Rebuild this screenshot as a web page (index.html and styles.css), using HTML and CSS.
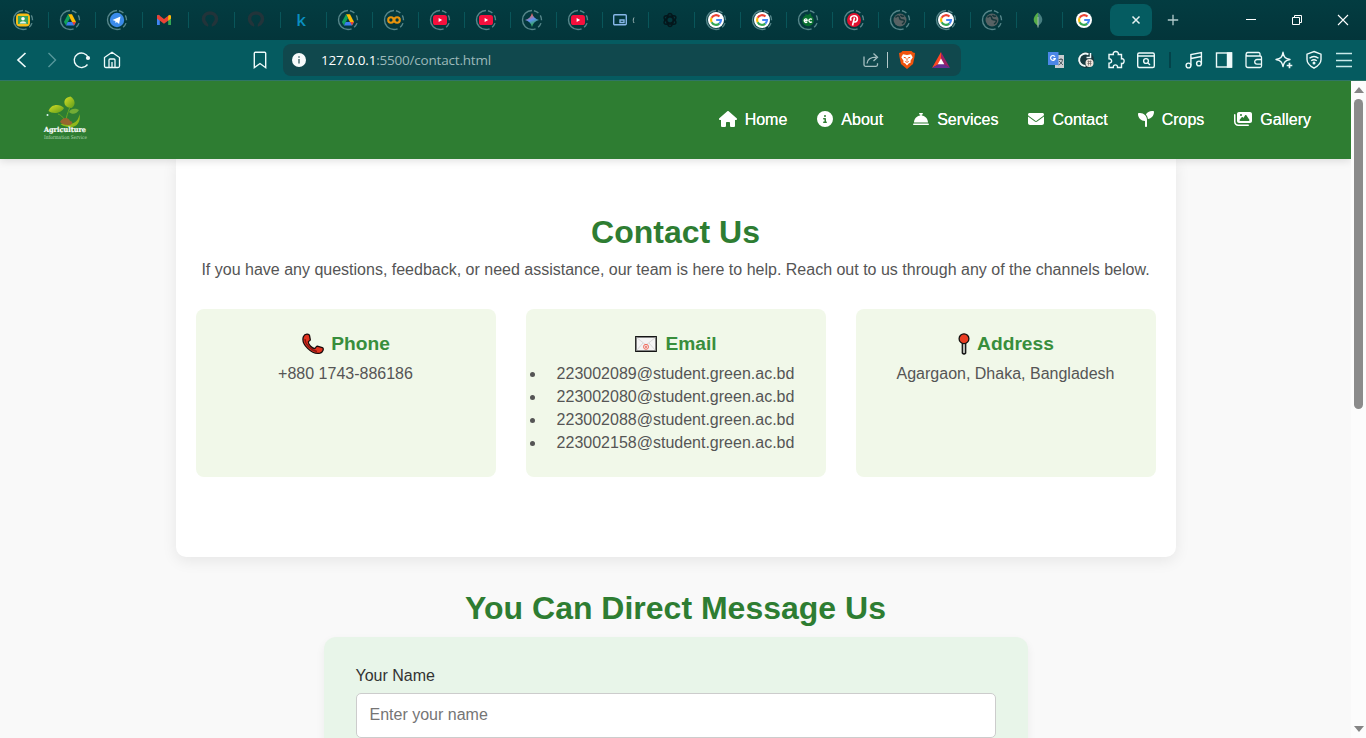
FILE: index.html
```html
<!DOCTYPE html>
<html lang="en">
<head>
<meta charset="utf-8">
<title>Contact</title>
<link rel="stylesheet" href="styles.css">
</head>
<body>
<svg class="defs" aria-hidden="true">
  <defs>
    <linearGradient id="spark" gradientUnits="userSpaceOnUse" x1="9" y1="6" x2="14" y2="19"><stop offset=".1" stop-color="#e9665c"/><stop offset=".45" stop-color="#5f8ff0"/><stop offset=".8" stop-color="#37a56a"/></linearGradient>
    <linearGradient id="leafA" x1="0" y1="0" x2="1" y2="1"><stop offset="0" stop-color="#d7df23"/><stop offset="1" stop-color="#5d9c1c"/></linearGradient>
  </defs>
  <symbol id="ring" viewBox="0 0 24 24"><g fill="none" stroke="#56868a" stroke-width="1.4"><path d="M12 2.500A9.500 9.500 0 0 0 12 21.500"/><path d="M12 2.500A9.500 9.500 0 0 1 12 21.500" stroke-dasharray="5 3" stroke-dashoffset="-2"/></g></symbol>
  <symbol id="drive" viewBox="0 0 24 24"><use href="#ring"/><path d="M10 6.300h4l4 7.600h-4z" fill="#fbbc04"/><path d="M10 6.300l2 3.800-4 7.400-2.100-3.400z" fill="#12a15a"/><path d="M9.700 14H18l-2 3.500H8z" fill="#3b7ded"/><path d="M14.200 14H18l-2 3.500z" fill="#ea4335"/></symbol>
  <symbol id="yt" viewBox="0 0 24 24"><use href="#ring"/><rect x="5" y="7" width="14" height="10" rx="2.600" fill="#f5103d"/><path d="M10.600 9.900v4.200l3.600-2.100z" fill="#fff"/></symbol>
  <symbol id="gmark" viewBox="0 0 24 24"><circle cx="12" cy="12" r="8" fill="#fff"/><g fill="none" stroke-width="2.100"><path d="M15.500 8.600A5 5 0 0 0 7.600 9.800" stroke="#ea4335"/><path d="M7.600 9.800a5 5 0 0 0 0 4.400" stroke="#fbbc05"/><path d="M7.600 14.200a5 5 0 0 0 7.700 1.400" stroke="#34a853"/><path d="M15.300 15.600A5 5 0 0 0 17 12h-4.800" stroke="#4285f4"/></g></symbol>
  <symbol id="globe" viewBox="0 0 24 24"><use href="#ring"/><circle cx="12" cy="12" r="6.500" fill="#576264"/><path d="M7.500 9.500c2-2.500 4-1.500 4 0s1.500 2.500 3.500 2.500 2 2-1 4M12.500 7c1 1.500 2.500 1.500 3.500 1" fill="none" stroke="#17373b" stroke-width="1.500"/></symbol>
  <symbol id="ghost" viewBox="0 0 24 24"><path d="M8.500 18c1-2-3-3-3-7 0-8 13-8 13 0 0 4-4 5-3 7" fill="none" stroke="#22343a" stroke-width="3.500"/></symbol>
</svg>

<div class="tabstrip">
  <div class="tab wide"><svg viewBox="0 0 24 24"><use href="#ring"/><rect x="5" y="5.500" width="14" height="13" rx="4" fill="#f5bd18"/><rect x="7" y="8" width="10" height="8" fill="#36a15c"/><circle cx="12" cy="10.700" r="1.800" fill="#fff"/><path d="M8.500 15.500c1-3 6-3 7 0z" fill="#e6f4e9"/></svg></div>
  <div class="tab wide"><svg><use href="#drive"/></svg></div>
  <div class="tab wide"><svg viewBox="0 0 24 24"><use href="#ring"/><circle cx="12" cy="12" r="7.200" fill="#3b8bea"/><path d="M7.500 12l8-3.600-1.400 7.600-2.300-1.900-1.200 1.200-.3-2.300z" fill="#fff"/></svg></div>
  <div class="tab"><svg viewBox="0 0 24 24"><path d="M5 7.500h2.800V17H5z" fill="#4285f4"/><path d="M16.200 7.500H19V17h-2.800z" fill="#34a853"/><path d="M5 7.500l1.500-.8L12 11l5.500-4.300L19 8v2.600l-7 5.200-7-5.200z" fill="#ea4335"/><path d="M16.200 8v4.700L19 10.600V8l-1.200-1z" fill="#fbbc04"/></svg></div>
  <div class="tab"><svg><use href="#ghost"/></svg></div>
  <div class="tab"><svg><use href="#ghost"/></svg></div>
  <div class="tab"><span class="k">k</span></div>
  <div class="tab"><svg><use href="#drive"/></svg></div>
  <div class="tab"><svg viewBox="0 0 24 24"><use href="#ring"/><g fill="none" stroke="#e8930c" stroke-width="2.100"><circle cx="8.900" cy="12" r="2.700"/><circle cx="15.100" cy="12" r="2.700"/></g></svg></div>
  <div class="tab"><svg><use href="#yt"/></svg></div>
  <div class="tab"><svg><use href="#yt"/></svg></div>
  <div class="tab"><svg viewBox="0 0 24 24"><use href="#ring"/><path d="M12 5c1 3.800 3 5.800 7 7-4 1-6 3.200-7 7-1-3.800-3-6-7-7 4-1.200 6-3.200 7-7z" fill="url(#spark)"/></svg></div>
  <div class="tab"><svg><use href="#yt"/></svg></div>
  <div class="tab"><svg viewBox="0 0 24 24"><g fill="none" stroke="#87b7e8" stroke-width="1.400"><rect x="1.700" y="6.700" width="12.600" height="10" rx="1"/><path d="M8 12h4v2.500H8z"/></g><path d="M22 9.500c-1 2-1 3.500 0 5.500" fill="none" stroke="#9cb4b4"/></svg></div>
  <div class="tab"><svg viewBox="0 0 24 24"><g fill="none" stroke="#04171c" stroke-width="1.500"><ellipse cx="12" cy="12" rx="3.200" ry="6.600"/><ellipse cx="12" cy="12" rx="3.200" ry="6.600" transform="rotate(60 12 12)"/><ellipse cx="12" cy="12" rx="3.200" ry="6.600" transform="rotate(120 12 12)"/></g></svg></div>
  <div class="tab"><svg viewBox="0 0 24 24"><use href="#ring"/><use href="#gmark"/></svg></div>
  <div class="tab"><svg viewBox="0 0 24 24"><use href="#ring"/><use href="#gmark"/></svg></div>
  <div class="tab"><svg viewBox="0 0 24 24"><use href="#ring"/><circle cx="12" cy="12.500" r="5.800" fill="#08702f"/><path d="M9 6l3 1 2.500-2 1 3-5 1z" fill="#08702f"/><g fill="none" stroke="#fff" stroke-width="1.300"><path d="M8.200 12.600h3c0-2.200-3-2.200-3 0s2 2.200 3 1.400M15.900 11.400c-1.200-1-3-.2-3 1.200s1.800 2.200 3 1.200"/></g></svg></div>
  <div class="tab"><svg viewBox="0 0 24 24"><use href="#ring"/><circle cx="12" cy="12" r="7" fill="#e0102f"/><path d="M10.500 17.500l2-8M9.200 12.700c-1.800-3 .3-5 2.900-5 4.500 0 4 6.300.8 6.300-1 0-1.500-.6-1.500-.6" fill="none" stroke="#fff" stroke-width="1.600"/></svg></div>
  <div class="tab"><svg><use href="#globe"/></svg></div>
  <div class="tab"><svg viewBox="0 0 24 24"><use href="#ring"/><use href="#gmark"/></svg></div>
  <div class="tab"><svg><use href="#globe"/></svg></div>
  <div class="tab"><svg viewBox="0 0 24 24"><path d="M12 4.500c-6 5-5.500 10 0 13.500z" fill="#55ad47"/><path d="M12 4.500c6 5 5.500 10 0 13.500z" fill="#477e80"/><path d="M12 9v10.500" stroke="#a7bfaf"/></svg></div>
  <div class="tab last"><svg><use href="#gmark"/></svg></div>
  <div class="tab-active"><svg viewBox="0 0 10 10"><path d="M1.500 1.500l7 7m0-7l-7 7" stroke="#e6f2f2" stroke-width="1.500"/></svg></div>
  <div class="newtab"><svg viewBox="0 0 12 12"><path d="M6 .8v10.400M.8 6h10.400" stroke="#b3cccd" stroke-width="1.300"/></svg></div>
  <div class="winctl">
    <svg viewBox="0 0 12 12"><path d="M1 5.500h10" stroke="#fff"/></svg>
    <svg viewBox="0 0 12 12"><path d="M1.500 3.500h7v7h-7zM3.500 3.500v-2h7v7h-2" fill="none" stroke="#fff"/></svg>
    <svg viewBox="0 0 12 12"><path d="M1 1l10 10M11 1L1 11" stroke="#fff" stroke-width="1.100"/></svg>
  </div>
</div>

<div class="toolbar">
  <div class="tools">
    <svg viewBox="0 0 30 30"><path d="M18.500 8l-7.500 7 7.500 7" stroke-width="1.700"/></svg>
    <svg viewBox="0 0 30 30"><path d="M11.500 8l7 7-7 7" stroke="#57979b"/></svg>
    <svg viewBox="0 0 30 30"><path d="M20.500 19.500a7.300 7.300 0 1 1 .8-7"/><circle cx="21" cy="13" r="2.100" fill="#eefafa" stroke="none"/></svg>
    <svg viewBox="0 0 30 30"><path d="M7.500 12.500l7.500-5.300 7.500 5.300v8.500q0 1.500-1.500 1.500H9q-1.500 0-1.500-1.500zM12 22.500v-7.500q0-1 1-1h4q1 0 1 1v7.500M15 17v5.500" stroke-width="1.300"/></svg>
  </div>
  <div class="tools bookmark"><svg viewBox="0 0 30 30"><path d="M9.300 8.300q0-1 1-1h9.400q1 0 1 1v14.400L15 18.500l-5.700 4.200z"/></svg></div>
  <div class="urlbar">
    <svg class="info" viewBox="0 0 14 14"><circle cx="7" cy="7" r="7" fill="#f7fbfb"/><path d="M7 6v4.500M7 3.300v1.500" stroke="#54777a" stroke-width="1.600"/></svg>
    <div class="url"><b>127.0.0.1</b>:5500/contact.html</div>
    <svg class="ico" viewBox="0 0 16 16"><path d="M1 4.500v8.300q0 1.500 1.500 1.500H13q1.500 0 1.500-1.500v-1.500M4 11.500c.4-4.500 3-6.300 9.500-6.300M10.500 1.500l4 3.700-4 3.700" fill="none" stroke="#a6bfc1" stroke-width="1.300"/></svg>
    <i class="sep"></i>
    <svg class="brave" viewBox="0 0 18 18"><path d="M4.500 0h9l1.500 1.500 2 .5-.5 4L15 13l-6 5-6-5L1.500 6 1 2l2-.5z" fill="#f0530c"/><path d="M5 3.300L9 4l4-.7 1.700 3-2.200 3.500.2 1.800-2 .9L9 14.500l-1.700-2-2-.9.200-1.800-2.200-3.500z" fill="#fff"/><path d="M5.800 6.300l2.200.7M12.200 6.300l-2.200.7M9 7.200v2.500M7.300 10.500l1.700.8 1.700-.8" stroke="#f0530c" fill="none"/></svg>
    <svg class="bat" viewBox="0 0 18 16"><path d="M9 0L0 16l9-5z" fill="#ff4724"/><path d="M9 0l9 16-9-5z" fill="#9e1f63"/><path d="M0 16h18l-9-5.500z" fill="#662d91"/><path d="M9 6.500l3.300 5.800H5.700z" fill="#fff"/></svg>
  </div>
  <div class="tools right">
    <svg viewBox="0 0 30 30"><rect x="14" y="10" width="9" height="13" fill="#c9cdd0" stroke="none"/><rect x="7" y="7" width="10.500" height="13" fill="#4b87e8" stroke="none"/><path d="M14 11.600a2.400 2.400 0 1 0 .3 2h-2" stroke="#fff" stroke-width="1.200"/><path d="M17.500 14.500H22M20 13v1.500M21.500 15c-.5 2.500-2 4-4 5M18 16l4 4" stroke="#56646b" stroke-width="1"/></svg>
    <svg viewBox="0 0 30 30"><circle cx="15" cy="15" r="8" fill="#17393e" stroke="none"/><path d="M17.500 9.500a6.200 6.200 0 1 0-3 11.500" stroke-width="2"/><path d="M15.500 12.500h4V8" stroke-width="1.500"/><circle cx="18.500" cy="18" r="4" fill="#efe4dc" stroke="none"/><path d="M16.500 16.500h4M16.500 18.500h4M17.500 15.500v5M19.500 15.500v5" stroke="#796e69" stroke-width=".8"/></svg>
    <svg viewBox="0 0 30 30"><path d="M8 9.500h4.300c-1-4 6-4 5 0h3.200v4.300c3.500-1 3.500 5.500 0 4.700v4h-4c.5-3.500-4.700-3.500-4.200 0H8v-4.300c3.500.2 3.500-4.500 0-4.400z"/></svg>
    <svg viewBox="0 0 30 30"><rect x="6.700" y="8" width="16.600" height="14.500" rx="1.500"/><path d="M7 11h16M17 18l2 2"/><circle cx="15" cy="16" r="2.400"/></svg>
    <i class="sep"></i>
    <svg viewBox="0 0 30 30"><circle cx="9.500" cy="20.500" r="2.400"/><circle cx="20" cy="18.500" r="2.400"/><path d="M11.900 20.500V9.500L22.400 7.500v11M11.900 13.500L22.400 11.500"/></svg>
    <svg viewBox="0 0 30 30"><rect x="7.500" y="8" width="15" height="14"/><path d="M18.500 8h4v14h-4z" fill="#eefafa"/></svg>
    <svg viewBox="0 0 30 30"><path d="M21 11V9q0-1.500-1.500-1.500h-11a1.800 1.800 0 0 0 0 3.500H21q1.500 0 1.500 1.500v8.500q0 1.500-1.500 1.500H9q-2 0-2-2V9.500M22.500 14.500H18a2.300 2.300 0 0 0 0 4.600h4.500" stroke-width="1.300"/></svg>
    <svg viewBox="0 0 30 30"><path d="M14 7.300c.9 5 2.200 6.200 7 7.200-4.800 1-6.100 2.700-7 7-.9-4.300-2.200-6-7-7 4.800-1 6.100-2.200 7-7.200z" stroke-linejoin="round"/><path d="M20.500 17.700v5.600M17.700 20.500h5.600" stroke-width="1.700"/></svg>
    <svg viewBox="0 0 30 30"><path d="M15 6.500l7 2.700v5.300c0 4.500-4 7-7 8.700-3-1.700-7-4.200-7-8.700V9.200z"/><path d="M10.500 13.200q4.500-3.500 9 0M12.200 15.800q2.800-2 5.600 0"/><circle cx="15" cy="18" r=".8" fill="#eefafa"/></svg>
    <svg viewBox="0 0 30 30"><path d="M7 8.500h16M7 15.500h16M7 21.500h16" stroke="#c9eaea" stroke-width="1.700"/></svg>
  </div>
</div>

<div class="viewport">
  <div class="page">
    <header class="site-header">
      <svg class="logo" viewBox="0 0 50 50">
        <path d="M26 28C35 31 39 24 39.500 19c1.500 8-3 14-10 13-4 0-8-2-9-3z" fill="#8fb71b"/>
        <path d="M25.500 30C25 23 21 20 18 19m8 8c0-6 2-9 3.500-14" stroke="#67a822" fill="none"/>
        <path d="M8.500 16c2-7 11-8 15.500-3-3 6-12 6-15.500 3z" fill="url(#leafA)"/>
        <path d="M25 10C23 5 26 2.500 30.500 1.500c5 3 5.500 9 1 11.500-3 0-5-1-6.500-3z" fill="url(#leafA)"/>
        <path d="M29 17c2-4 7-4 10-2-2 4-7 5-10 2z" fill="#72ac35"/>
        <path d="M20 27c2-4 8-6 10-1 3 0 3 3 0 4-4 0-7 0-10-3z" fill="#97652e"/>
        <circle cx="7.500" cy="20" r="1" fill="#dff5f5"/>
        <text class="logo-name" x="4" y="37" textLength="42" lengthAdjust="spacingAndGlyphs">Agriculture</text>
        <text class="logo-sub" x="4" y="43.500" textLength="43" lengthAdjust="spacingAndGlyphs">Information Service</text>
      </svg>
      <nav class="nav">
        <a><svg class="w18" viewBox="0 0 576 512"><path d="M575.800 255.500c0 18-15 32.100-32 32.100h-32l.7 160.200V472c0 22.100-17.900 40-40 40H392c-22.100 0-40-17.900-40-40v-88c0-17.700-14.300-32-32-32h-64c-17.700 0-32 14.300-32 32v88c0 22.100-17.900 40-40 40h-80c-22.100 0-40-17.900-40-40V287.600H32c-18 0-32-14-32-32.100 0-9 3-17 10-24L266.400 8c7-7 15-8 22-8s15 2 21 7l255.400 224.500c8 7 12 15 11 24z"/></svg>Home</a>
        <a><svg viewBox="0 0 512 512"><path d="M256 512A256 256 0 1 0 256 0a256 256 0 1 0 0 512zM216 336h24v-64h-24c-13.300 0-24-10.700-24-24s10.700-24 24-24h48c13.300 0 24 10.700 24 24v88h8c13.300 0 24 10.700 24 24s-10.700 24-24 24h-80c-13.300 0-24-10.700-24-24s10.700-24 24-24zm40-208a32 32 0 1 1 0 64 32 32 0 1 1 0-64z"/></svg>About</a>
        <a><svg viewBox="0 0 512 512"><path d="M216 64c-13.300 0-24 10.700-24 24s10.700 24 24 24h16v33.300C119.600 157.200 32 252.400 32 368h448c0-115.600-87.600-210.800-200-222.700V112h16c13.300 0 24-10.700 24-24s-10.700-24-24-24h-80zM24 400c-13.300 0-24 10.700-24 24s10.700 24 24 24h464c13.300 0 24-10.700 24-24s-10.700-24-24-24H24z"/></svg>Services</a>
        <a><svg viewBox="0 0 512 512"><path d="M48 64C21.500 64 0 85.500 0 112c0 15.100 7.100 29.300 19.200 38.400l217.600 163.200c11.400 8.500 27 8.500 38.400 0l217.600-163.200c12.100-9.100 19.200-23.300 19.200-38.400 0-26.500-21.500-48-48-48H48zM0 176v208c0 35.300 28.700 64 64 64h384c35.300 0 64-28.700 64-64V176L294.400 339.200c-22.800 17.100-54 17.100-76.800 0L0 176z"/></svg>Contact</a>
        <a><svg viewBox="0 0 512 512"><path d="M512 32c0 113.600-84.600 207.500-194.200 222-7.100-53.400-30.600-101.600-65.300-139.300C290.800 46.300 364 0 448 0h32c17.700 0 32 14.300 32 32zM0 96c0-17.700 14.300-32 32-32h32c123.700 0 224 100.300 224 224v192c0 17.700-14.300 32-32 32s-32-14.300-32-32V320C100.300 320 0 219.700 0 96z"/></svg>Crops</a>
        <a><svg class="w18" viewBox="0 0 576 512"><path d="M160 32c-35.300 0-64 28.700-64 64v224c0 35.300 28.700 64 64 64h352c35.300 0 64-28.700 64-64V96c0-35.300-28.700-64-64-64H160zM396 138.700l96 144c4.900 7.400 5.400 16.800 1.200 24.600S480.900 320 472 320H200c-9.200 0-17.600-5.300-21.600-13.600s-2.900-18.200 2.900-25.400l64-80c4.600-5.700 11.400-9 18.700-9s14.200 3.300 18.700 9l17.300 21.600 56-84C360.500 132 368 128 376 128s15.500 4 20 10.700zM192 128a32 32 0 1 1 64 0 32 32 0 1 1-64 0zM48 120c0-13.300-10.700-24-24-24S0 106.700 0 120v224c0 75.100 60.900 136 136 136h320c13.300 0 24-10.700 24-24s-10.700-24-24-24H136c-48.600 0-88-39.400-88-88V120z"/></svg>Gallery</a>
      </nav>
    </header>
    <section class="contact">
      <h2>Contact Us</h2>
      <p>If you have any questions, feedback, or need assistance, our team is here to help. Reach out to us through any of the channels below.</p>
      <div class="cards">
        <div class="card">
          <h3><svg class="phone" viewBox="0 0 22 22"><path d="M1.500 3.500C3 .5 7 .5 7.500 2.500l.8 4.300c0 1.200-2 1.200-2 2.200 0 2.500 4 6.500 6.500 6.500 1 0 1-2.500 2.500-2.300l5 1.300c2 1 .5 5-2.300 5.700C10 22-1.500 11 1.500 3.500z" fill="#e3331f" stroke="#1a0b0b" stroke-width="1.300"/><path d="M3 6c0 5 6 11.500 12 12.500" fill="none" stroke="#8e1412" stroke-width="1.300"/></svg>Phone</h3>
          <p>+880 1743-886186</p>
        </div>
        <div class="card">
          <h3><svg class="mail" viewBox="0 0 22 16"><path d="M.8.800h20.400v14.400H.8z" fill="#f4f4f4" stroke="#151515" stroke-width="1.400"/><path d="M1.500 1.500L11 9l9.500-7.500M1.500 14.500L8 7m12.500 7.500L14 7" fill="none" stroke="#d2d2d2" stroke-width=".8"/><circle cx="11" cy="10.800" r="2.500" fill="#f4f4f4" stroke="#ef6a5c"/><circle cx="11" cy="10.800" r=".8" fill="none" stroke="#ef4a3c" stroke-width=".8"/></svg>Email</h3>
          <ul>
            <li>223002089@student.green.ac.bd</li>
            <li>223002080@student.green.ac.bd</li>
            <li>223002088@student.green.ac.bd</li>
            <li>223002158@student.green.ac.bd</li>
          </ul>
        </div>
        <div class="card">
          <h3><svg class="pin" viewBox="0 0 12 22"><path d="M4.300 9h3.400v11q-1.700 2-3.400 0z" fill="#b7bbb4" stroke="#111" stroke-width="1.300"/><circle cx="6" cy="5.700" r="4.900" fill="#ea3d22" stroke="#111" stroke-width="1.300"/></svg>Address</h3>
          <p>Agargaon, Dhaka, Bangladesh</p>
        </div>
      </div>
    </section>
    <section class="message">
      <h2>You Can Direct Message Us</h2>
      <form class="form">
        <label for="name">Your Name</label>
        <input id="name" type="text" placeholder="Enter your name">
      </form>
    </section>
  </div>
  <div class="scrollbar">
    <svg viewBox="0 0 10 6"><path d="M5 0l5 6H0z" fill="#858585"/></svg>
    <i class="thumb"></i>
    <svg class="down" viewBox="0 0 10 6"><path d="M0 0h10L5 6z" fill="#858585"/></svg>
  </div>
</div>
</body>
</html>
```

FILE: styles.css
```css
* { box-sizing: border-box; margin: 0; padding: 0; }
body {
  width: 1366px;
  height: 738px;
  overflow: hidden;
  display: flex;
  flex-direction: column;
  font: 16px/23px "Liberation Sans", Arial, sans-serif;
  background: #f9f9f9;
}
svg { display: block; flex: none; }
.defs { position: absolute; width: 0; height: 0; }

/* Tab strip */
.tabstrip {
  height: 40px;
  flex: none;
  display: flex;
  align-items: center;
  padding-left: 2px;
  background: linear-gradient(#033c41, #03353a);
}
.tab {
  width: 46px;
  height: 16px;
  flex: none;
  display: flex;
  align-items: center;
  padding-left: 9px;
  border-right: 1px solid #09565a;
}
.tab.wide { width: 47px; }
.tab.last { border-color: transparent; }
.tab svg { width: 24px; height: 24px; }
.k { width: 22px; text-align: center; font: 600 17px/20px "Open Sans", sans-serif; color: #0a8fc0; }
.tab-active {
  width: 42px;
  height: 32px;
  margin-left: 1px;
  padding: 11px 0 0 21px;
  border-radius: 8px;
  background: #055c61;
}
.tab-active svg { width: 10px; height: 10px; }
.newtab { padding-left: 15px; }
.newtab svg { width: 12px; height: 12px; }
.winctl { margin-left: auto; display: flex; gap: 34px; padding-right: 17px; }
.winctl svg { width: 12px; height: 12px; }

/* Toolbar */
.toolbar {
  height: 41px;
  flex: none;
  display: flex;
  align-items: center;
  padding: 0 7px 1px;
  background: #055b60;
  border-bottom: 1px solid #2f7566;
}
.tools { display: flex; align-items: center; }
.tools svg { width: 30px; height: 30px; fill: none; stroke: #eefafa; stroke-width: 1.4; }
.bookmark { margin-left: 118px; }
.urlbar {
  width: 678px;
  height: 32px;
  margin-left: 8px;
  padding: 0 11px 0 9px;
  display: flex;
  align-items: center;
  border-radius: 8px;
  background: #10484d;
}
.info { width: 14px; height: 14px; }
.url {
  flex: 1;
  margin-left: 15px;
  font: 13.5px/20px "Open Sans", "Noto Sans", sans-serif;
  letter-spacing: -.2px;
  color: #9cb8ba;
  white-space: nowrap;
}
.url b { font-weight: 400; color: #fff; }
.ico { width: 16px; height: 16px; }
.urlbar .sep { width: 1px; height: 16px; margin: 0 10px 0 8px; background: #b5c9ca; }
.brave { width: 18px; height: 18px; }
.bat { width: 18px; height: 16px; margin-left: 16px; }
.right { margin-left: auto; }
.right .sep { width: 2px; height: 16px; margin: 0 8px; background: #03434a; }

/* Page viewport */
.viewport { flex: 1; min-height: 0; display: flex; }
.page { width: 1351px; overflow: hidden; }
.site-header {
  position: relative;
  z-index: 1;
  height: 78px;
  display: flex;
  align-items: center;
  justify-content: space-between;
  padding: 0 40px;
  background: #2e7d32;
  box-shadow: 0 2px 8px rgba(0, 0, 0, .12);
}
.logo { width: 50px; height: 50px; overflow: visible; }
.logo-name { font: bold 7px "DejaVu Serif", serif; fill: #fff; stroke: #fff; stroke-width: .2px; }
.logo-sub { font: 5px "DejaVu Serif", serif; fill: #b6d9b8; }
.nav { display: flex; gap: 30px; padding-bottom: 2px; }
.nav a { display: flex; align-items: center; gap: 8px; color: #fff; text-shadow: 0 0 .5px #fff; }
.nav svg { width: 16px; height: 16px; fill: #fff; }
.nav .w18 { width: 18px; }

.contact {
  width: 1000px;
  height: 398px;
  margin: 0 auto;
  padding: 53px 20px 0;
  text-align: center;
  color: #555;
  background: #fff;
  border-radius: 0 0 10px 10px;
  box-shadow: 0 4px 15px rgba(0, 0, 0, .08);
}
h2 { font-size: 32px; line-height: 40px; color: #2e7d32; text-align: center; }
.contact > p { margin-top: 6px; white-space: nowrap; }
.cards { display: grid; grid-template-columns: repeat(3, 300px); gap: 30px; margin-top: 28px; }
.card { height: 168px; padding: 21px 20px 20px; border-radius: 8px; background: #f1f8e9; }
.card h3 {
  display: flex;
  align-items: center;
  justify-content: center;
  margin-bottom: 4px;
  padding-left: 1px;
  font-size: 19.2px;
  line-height: 28px;
  color: #388e3c;
}
.phone { width: 22px; height: 22px; margin-right: 7px; }
.mail { width: 22px; height: 16px; margin-right: 8px; }
.pin { width: 12px; height: 22px; margin-right: 7px; }

.message { padding-top: 31px; }
.form {
  width: 704px;
  margin: 9px auto 0;
  padding: 27px 32px 32px;
  border-radius: 12px;
  background: #e8f5e9;
  box-shadow: 0 4px 10px rgba(0, 0, 0, .06);
}
label { display: block; color: #333; }
input {
  display: block;
  width: 100%;
  height: 45px;
  margin-top: 6px;
  padding: 0 13px 2px;
  font: 16px "Liberation Sans", Arial, sans-serif;
  background: #fff;
  border: 1px solid #ccc;
  border-radius: 5px;
}
input::placeholder { color: #757575; }

.scrollbar {
  width: 15px;
  display: flex;
  flex-direction: column;
  align-items: center;
  padding: 6px 0;
  background: #fcfcfc;
}
.scrollbar svg { width: 10px; height: 6px; }
.thumb { width: 9px; height: 310px; margin-top: 6px; border-radius: 5px; background: #8b8b8b; }
.scrollbar .down { margin-top: auto; }
```
